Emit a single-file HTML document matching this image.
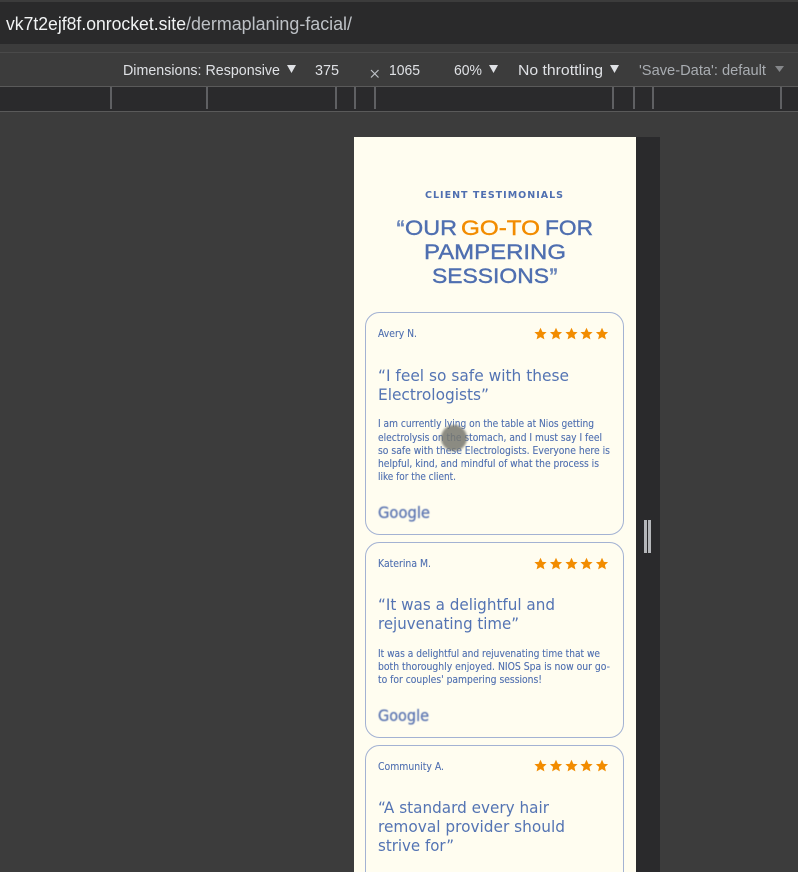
<!DOCTYPE html>
<html>
<head>
<meta charset="utf-8">
<style>
html,body{margin:0;padding:0;width:798px;height:872px;overflow:hidden;background:#3c3c3c}
svg{display:block}
text{font-family:"Liberation Sans",sans-serif}
.c{font-size:15px;fill:#dfe1e5}
.n{font-size:10.2px;fill:#4f6fb0;stroke:#4f6fb0;stroke-width:.1;font-family:"DejaVu Sans",sans-serif}
.q{font-size:16.3px;fill:#5474b3;font-family:"DejaVu Sans",sans-serif}
.b{font-size:10.4px;fill:#4f6fb0;stroke:#4f6fb0;stroke-width:.12;font-family:"DejaVu Sans",sans-serif}
.h{font-size:21px;fill:#4f6fb0;stroke:#4f6fb0;stroke-width:.4}
.g{font-size:16px;fill:#5f78b3;stroke:#5f78b3;stroke-width:.35;font-family:"DejaVu Sans",sans-serif;filter:url(#bl)}
</style>
</head>
<body>
<svg width="798" height="872" viewBox="0 0 798 872" xmlns="http://www.w3.org/2000/svg">
<defs>
<filter id="bl" x="-10%" y="-10%" width="120%" height="120%"><feGaussianBlur stdDeviation=".4"/></filter>
<filter id="bl2" x="-30%" y="-30%" width="160%" height="160%"><feGaussianBlur stdDeviation="1"/></filter>
<polygon id="s" points="0,-6.2 1.9,-2.1 6.1,-1.9 2.9,1 3.9,5.4 0,3.1 -3.9,5.4 -2.9,1 -6.1,-1.9 -1.9,-2.1" fill="#f28c00"/>
<g id="st"><use href="#s" x="540.5"/><use href="#s" x="556"/><use href="#s" x="571.5"/><use href="#s" x="586.5"/><use href="#s" x="602"/></g>
</defs>

<rect width="798" height="872" fill="#3c3c3c"/>
<rect y="2" width="798" height="42" fill="#2a2a2b"/>
<rect y="52" width="798" height="1" fill="#4a4a4a"/>
<rect y="86" width="798" height="1" fill="#5a5a5a"/>
<rect y="87" width="798" height="24" fill="#2a2a2c"/>
<rect y="111" width="798" height="1" fill="#5a5a5a"/>
<g fill="#5f6063">
<rect x="110" y="87" width="2" height="22"/><rect x="206" y="87" width="2" height="22"/>
<rect x="335" y="87" width="2" height="22"/><rect x="354" y="87" width="2" height="22"/><rect x="374" y="87" width="2" height="22"/>
<rect x="612" y="87" width="2" height="22"/><rect x="633" y="87" width="2" height="22"/><rect x="652" y="87" width="2" height="22"/><rect x="780" y="87" width="2" height="22"/>
</g>

<text x="6" y="30" font-size="18" fill="#f1f3f4" textLength="180" lengthAdjust="spacingAndGlyphs">vk7t2ejf8f.onrocket.site</text>
<text x="186" y="30" font-size="18" fill="#bdc1c6" textLength="166" lengthAdjust="spacingAndGlyphs">/dermaplaning-facial/</text>

<text class="c" x="123" y="75" textLength="157" lengthAdjust="spacingAndGlyphs">Dimensions: Responsive</text>
<polygon points="287,65 296,65 291.500,73" fill="#dfe1e5"/>
<text class="c" x="315" y="75" textLength="24" lengthAdjust="spacingAndGlyphs">375</text>
<path d="M371 70l7.500 7.500M378.500 70l-7.500 7.500" stroke="#bdc1c6" stroke-width="1.200" fill="none"/>
<text class="c" x="389" y="75" textLength="31" lengthAdjust="spacingAndGlyphs">1065</text>
<text class="c" x="454" y="75" textLength="28" lengthAdjust="spacingAndGlyphs">60%</text>
<polygon points="489,65 498,65 493.500,73" fill="#dfe1e5"/>
<text class="c" x="518" y="75" textLength="85" lengthAdjust="spacingAndGlyphs">No throttling</text>
<polygon points="610,65 619,65 614.500,73" fill="#dfe1e5"/>
<text x="639" y="75" font-size="15" fill="#a9adb2" textLength="127" lengthAdjust="spacingAndGlyphs">'Save-Data': default</text>
<polygon points="775,66 784,66 779.500,72" fill="#85878a"/>

<rect x="636" y="137" width="24" height="735" fill="#2a2a2c"/>
<rect x="644" y="520" width="3" height="33" fill="#b5b7ba"/>
<rect x="648" y="520" width="3" height="33" fill="#b5b7ba"/>
<rect x="354" y="137" width="282" height="735" fill="#fffdf0"/>

<text x="425" y="198" font-size="9.500" font-weight="bold" fill="#4f6fb0" style="font-family:'DejaVu Sans',sans-serif" textLength="138" lengthAdjust="spacing">CLIENT TESTIMONIALS</text>
<text class="h" x="396" y="235" style="fill:#6d88bb;stroke:#6d88bb" font-weight="bold" textLength="9" lengthAdjust="spacingAndGlyphs">“</text>
<text class="h" x="405" y="235" textLength="52" lengthAdjust="spacingAndGlyphs">OUR</text>
<text class="h" x="461" y="235" style="fill:#f28c00;stroke:#f28c00" textLength="79" lengthAdjust="spacingAndGlyphs">GO-TO</text>
<text class="h" x="545" y="235" textLength="48" lengthAdjust="spacingAndGlyphs">FOR</text>
<text class="h" x="424" y="259" textLength="142" lengthAdjust="spacingAndGlyphs">PAMPERING</text>
<text class="h" x="432" y="283" textLength="117" lengthAdjust="spacingAndGlyphs">SESSIONS</text>
<text class="h" x="549" y="283" style="fill:#6d88bb;stroke:#6d88bb" font-weight="bold" textLength="9" lengthAdjust="spacingAndGlyphs">”</text>

<g fill="none" stroke="#a3b2d3" stroke-width="1">
<rect x="365.500" y="312.500" width="258" height="222" rx="14"/>
<rect x="365.500" y="542.500" width="258" height="195" rx="14"/>
<rect x="365.500" y="745.500" width="258" height="150" rx="14"/>
</g>

<text class="n" x="378" y="337" textLength="39" lengthAdjust="spacingAndGlyphs">Avery N.</text>
<use href="#st" y="334"/>
<text class="q" x="378" y="381" textLength="191" lengthAdjust="spacingAndGlyphs">“I feel so safe with these</text>
<text class="q" x="378" y="400" textLength="111" lengthAdjust="spacingAndGlyphs">Electrologists”</text>
<text class="b" x="378" y="427" textLength="216" lengthAdjust="spacingAndGlyphs">I am currently lying on the table at Nios getting</text>
<text class="b" x="378" y="441" textLength="224" lengthAdjust="spacingAndGlyphs">electrolysis on the stomach, and I must say I feel</text>
<text class="b" x="378" y="454" textLength="232" lengthAdjust="spacingAndGlyphs">so safe with these Electrologists. Everyone here is</text>
<text class="b" x="378" y="467" textLength="221" lengthAdjust="spacingAndGlyphs">helpful, kind, and mindful of what the process is</text>
<text class="b" x="378" y="480" textLength="78" lengthAdjust="spacingAndGlyphs">like for the client.</text>
<text class="g" x="378" y="518" textLength="52" lengthAdjust="spacingAndGlyphs">Google</text>

<text class="n" x="378" y="567" textLength="53" lengthAdjust="spacingAndGlyphs">Katerina M.</text>
<use href="#st" y="564"/>
<text class="q" x="378" y="610" textLength="177" lengthAdjust="spacingAndGlyphs">“It was a delightful and</text>
<text class="q" x="378" y="629" textLength="141" lengthAdjust="spacingAndGlyphs">rejuvenating time”</text>
<text class="b" x="378" y="657" textLength="222" lengthAdjust="spacingAndGlyphs">It was a delightful and rejuvenating time that we</text>
<text class="b" x="378" y="670" textLength="232" lengthAdjust="spacingAndGlyphs">both thoroughly enjoyed. NIOS Spa is now our go-</text>
<text class="b" x="378" y="683" textLength="164" lengthAdjust="spacingAndGlyphs">to for couples' pampering sessions!</text>
<text class="g" x="378" y="721" textLength="51" lengthAdjust="spacingAndGlyphs">Google</text>

<text class="n" x="378" y="770" textLength="66" lengthAdjust="spacingAndGlyphs">Community A.</text>
<use href="#st" y="766"/>
<text class="q" x="378" y="813" textLength="171" lengthAdjust="spacingAndGlyphs">“A standard every hair</text>
<text class="q" x="378" y="832" textLength="187" lengthAdjust="spacingAndGlyphs">removal provider should</text>
<text class="q" x="378" y="851" textLength="76" lengthAdjust="spacingAndGlyphs">strive for”</text>
<text class="b" x="378" y="880" textLength="224" lengthAdjust="spacingAndGlyphs">I was impressed by the professional and kind</text>

<circle cx="454" cy="438" r="13" fill="#77776f" fill-opacity=".85" filter="url(#bl2)"/>
</svg>
</body>
</html>
